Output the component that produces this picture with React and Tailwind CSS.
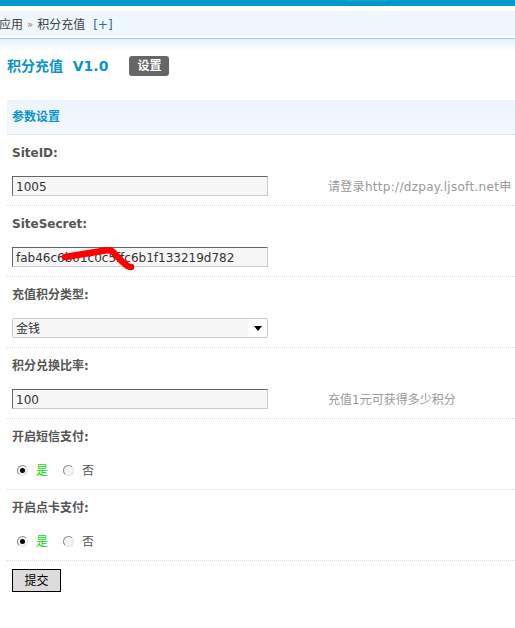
import React from "react";

const FONT = { fontFamily: '"DejaVu Sans", "Noto Sans CJK SC", sans-serif' };

function Field({ label, children }) {
  return (
    <div className="border-b border-dotted border-[#cfe0ec]">
      <div className="h-[36px] flex items-center pl-[5px] font-bold text-[#555] whitespace-nowrap">{label}</div>
      {children}
    </div>
  );
}

function TextInput({ value, children }) {
  return (
    <div className="relative w-[256px] h-[20px]">
      <input
        readOnly
        value={value}
        className="w-[256px] h-[20px] bg-[#f7f7f7] border border-t-[#666] border-l-[#666] border-b-[#ccc] border-r-[#ccc] px-[3px] pt-[1px] text-[#333] text-[12px] outline-none"
      />
      {children}
    </div>
  );
}

function InputRow({ value, hint, wide, overlay }) {
  return (
    <div className="h-[34px] flex items-start pt-[5px] pl-[5px] whitespace-nowrap">
      <div className="w-[316px] shrink-0">
        <TextInput value={value}>{overlay}</TextInput>
      </div>
      {hint && (
        <div className={wide ? "text-[#999] leading-[22px] tracking-[0.3px]" : "text-[#999] leading-[22px]"}>{hint}</div>
      )}
    </div>
  );
}

function Radio({ checked }) {
  return (
    <div className="w-[11px] h-[11px] rounded-full border border-t-[#8a8a8a] border-l-[#8a8a8a] border-b-[#e4e4e4] border-r-[#e4e4e4] bg-[#f4f4f4] flex items-center justify-center">
      {checked && <div className="w-[5px] h-[5px] rounded-full bg-black" />}
    </div>
  );
}

function RadioRow() {
  return (
    <div className="h-[34px] flex items-start pt-[5px] pl-[5px]">
      <div className="flex items-center h-[20px] ml-[5px]">
        <Radio checked />
        <span className="ml-[8px] text-[#00dd00] pt-[2px]">是</span>
        <div className="ml-[15px]"><Radio /></div>
        <span className="ml-[8px] text-[#555] pt-[2px]">否</span>
      </div>
    </div>
  );
}

export default function App() {
  return (
    <div className="w-[515px] h-[628px] overflow-hidden bg-white text-[12px]" style={FONT}>
      <div className="h-[6px] bg-[#0099cc] flex">
        <div className="ml-[346px] w-[40px] h-[1px] bg-[#1aa3d4]" />
      </div>
      <div className="h-[5px]" />
      <div className="h-[25px] bg-[#eef7fb] flex items-center pt-[2px] text-[#444] whitespace-nowrap">
        <span className="ml-[-1px]">应用</span>
        <span className="mx-[4px] text-[10px] text-[#a08060]">»</span>
        <span>积分充值</span>
        <span className="ml-[8px] text-[#3366aa]">[+]</span>
      </div>
      <div className="h-[2px]" />
      <div className="h-[1px] bg-[#b3d2e4]" />
      <div className="h-[12px] bg-gradient-to-b from-[#e3f0f9] to-white" />

      <div className="mt-[5px] h-[20px] flex items-center pl-[7px] whitespace-nowrap">
        <span className="font-bold text-[14px] text-[#0a93cc]">积分充值&nbsp; V1.0</span>
        <span className="ml-[21px] w-[40px] h-[20px] rounded-[3px] bg-[#666] text-white font-bold flex items-center justify-center">设置</span>
      </div>

      <div className="mt-[24px] ml-[7px]">
        <div className="h-[35px] bg-gradient-to-b from-[#edf4fc] to-[#f3f8fd] border-b border-dotted border-[#cfe0ec] flex items-center pl-[5px] font-bold text-[#0a93cc]">
          参数设置
        </div>

        <Field label="SiteID:">
          <InputRow value="1005" hint="请登录http://dzpay.ljsoft.net申" wide />
        </Field>

        <Field label="SiteSecret:">
          <InputRow
            value="fab46c6b01c0c5ffc6b1f133219d782"
            overlay={
              <svg className="absolute left-0 top-0 pointer-events-none" width="140" height="26" viewBox="0 0 140 26">
                <path
                  d="M53,10 C65,8 78,6 90,4 C95,3 98,2 101,5 C105,9 109,14 113,17 C115,19 117,20 119,20"
                  fill="none"
                  stroke="#ff0000"
                  strokeWidth="6.5"
                  strokeLinecap="round"
                  strokeLinejoin="round"
                />
              </svg>
            }
          />
        </Field>

        <Field label="充值积分类型:">
          <div className="h-[34px] flex items-start pt-[5px] pl-[5px]">
            <div className="w-[256px] h-[20px] border border-[#c8c8c8] rounded-[2px] bg-white flex items-stretch">
              <div className="w-[235px] bg-[#f7f7f7] flex items-center pl-[3px] pt-[1px] text-[#333]">金钱</div>
              <div className="flex-1 flex items-center justify-center">
                <div className="w-0 h-0 border-l-[4px] border-r-[4px] border-t-[5px] border-l-transparent border-r-transparent border-t-black" />
              </div>
            </div>
          </div>
        </Field>

        <Field label="积分兑换比率:">
          <InputRow value="100" hint="充值1元可获得多少积分" />
        </Field>

        <Field label="开启短信支付:">
          <RadioRow />
        </Field>

        <Field label="开启点卡支付:">
          <RadioRow />
        </Field>

        <div className="pt-[8px] pl-[5px]">
          <button className="w-[49px] h-[23px] border border-black bg-[#dcdcdc] text-black text-[12px] flex items-center justify-center">
            提交
          </button>
        </div>
      </div>
    </div>
  );
}
